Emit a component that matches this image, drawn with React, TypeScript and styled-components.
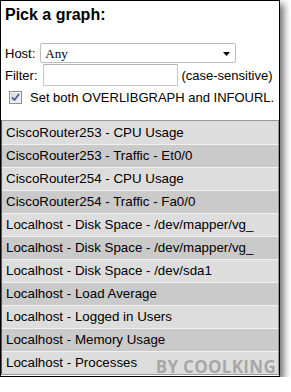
import React from 'react';
import styled, { createGlobalStyle } from 'styled-components';

const GlobalStyle = createGlobalStyle`
  html, body {
    margin: 0;
    padding: 0;
    background: #fff;
  }
  body {
    font-family: 'Liberation Sans', Arial, sans-serif;
    color: #000;
  }
`;

const Panel = styled.div`
  box-sizing: border-box;
  width: 280px;
  border: 1px solid #000;
  padding: 0 0 1px 0;
  background: #fff;
  box-shadow: 4px 4px 7px rgba(0, 0, 0, 0.55);
`;

const Title = styled.h3`
  margin: 4px 0 0 4px;
  font-size: 16px;
  line-height: 19px;
  font-weight: 700;
`;

const Form = styled.div`
  margin-top: 19px;
  padding-left: 4px;
  font-size: 13px;
`;

const Row = styled.div<{ h: number; top?: number }>`
  display: flex;
  align-items: center;
  height: ${p => p.h}px;
  margin-top: ${p => p.top ?? 0}px;
  white-space: nowrap;
`;

const SelectWrap = styled.div`
  position: relative;
  margin-left: 5px;
`;

const Select = styled.select`
  box-sizing: border-box;
  width: 196px;
  height: 20px;
  appearance: none;
  border: 1px solid #bdbdbd;
  border-radius: 2px;
  background: #fff;
  padding: 0 0 0 4px;
  font-family: 'Liberation Serif', 'Times New Roman', serif;
  font-size: 13px;
  color: #000;
  outline: none;
`;

const Arrow = styled.svg`
  position: absolute;
  right: 5px;
  top: 9px;
  pointer-events: none;
`;

const Input = styled.input`
  box-sizing: border-box;
  width: 135px;
  height: 22px;
  margin: 0 4px 0 5px;
  border: 1px solid #c6c6c6;
  border-top-color: #b4b4b4;
  padding: 0 3px;
  font-family: 'Liberation Sans', Arial, sans-serif;
  font-size: 13px;
  outline: none;
`;

const CheckLabel = styled.label`
  display: flex;
  align-items: center;
  gap: 8px;
  padding-left: 4px;
`;

const CheckBox = styled.span`
  box-sizing: border-box;
  display: flex;
  align-items: center;
  justify-content: center;
  width: 13px;
  height: 13px;
  border: 1px solid #8e8f8f;
  background: linear-gradient(135deg, #d8d8d8 0%, #f4f4f4 100%);
  box-shadow: inset 0 0 0 1px #f0f0f0;
`;

const List = styled.div`
  position: relative;
  margin: 15px 0 0 0;
  border: 1px solid #999;
  border-left-color: #555;
`;

const Item = styled.div<{ dark: boolean; first: boolean }>`
  height: 22px;
  line-height: 22px;
  padding-left: 4px;
  font-size: 13.33px;
  white-space: nowrap;
  overflow: hidden;
  background: ${p => (p.dark ? '#cacaca' : '#dddddd')};
  border-top: 1px solid ${p => (p.first ? '#dddddd' : '#f0f0f0')};
`;

const Watermark = styled.div`
  position: absolute;
  right: 2px;
  bottom: 0;
  font-family: 'Open Sans', sans-serif;
  font-weight: 700;
  font-size: 17px;
  line-height: 15px;
  letter-spacing: 0.3px;
  color: rgba(120, 120, 120, 0.55);
  pointer-events: none;
`;

const graphs = [
  'CiscoRouter253 - CPU Usage',
  'CiscoRouter253 - Traffic - Et0/0',
  'CiscoRouter254 - CPU Usage',
  'CiscoRouter254 - Traffic - Fa0/0',
  'Localhost - Disk Space - /dev/mapper/vg_',
  'Localhost - Disk Space - /dev/mapper/vg_',
  'Localhost - Disk Space - /dev/sda1',
  'Localhost - Load Average',
  'Localhost - Logged in Users',
  'Localhost - Memory Usage',
  'Localhost - Processes',
];

const App: React.FC = () => (
  <>
    <GlobalStyle />
    <Panel>
      <Title>Pick a graph:</Title>
      <Form>
        <Row h={20}>
          <span>Host:</span>
          <SelectWrap>
            <Select defaultValue="any">
              <option value="any">Any</option>
            </Select>
            <Arrow width="8" height="4" viewBox="0 0 8 4">
              <path d="M0 0H7L3.5 4Z" fill="#000" />
            </Arrow>
          </SelectWrap>
        </Row>
        <Row h={22} top={1}>
          <span>Filter:</span>
          <Input type="text" />
          <span>(case-sensitive)</span>
        </Row>
        <Row h={16} top={3}>
          <CheckLabel>
            <CheckBox>
              <svg width="9" height="9" viewBox="0 0 9 9">
                <path
                  d="M1 4.5L3.5 7L8 1"
                  fill="none"
                  stroke="#4b5f9a"
                  strokeWidth="1.8"
                />
              </svg>
            </CheckBox>
            <span>Set both OVERLIBGRAPH and INFOURL.</span>
          </CheckLabel>
        </Row>
      </Form>
      <List>
        {graphs.map((g, i) => (
          <Item key={i} dark={i % 2 === 1} first={i === 0}>
            {g}
          </Item>
        ))}
        <Watermark>BY COOLKING</Watermark>
      </List>
    </Panel>
  </>
);

export default App;
